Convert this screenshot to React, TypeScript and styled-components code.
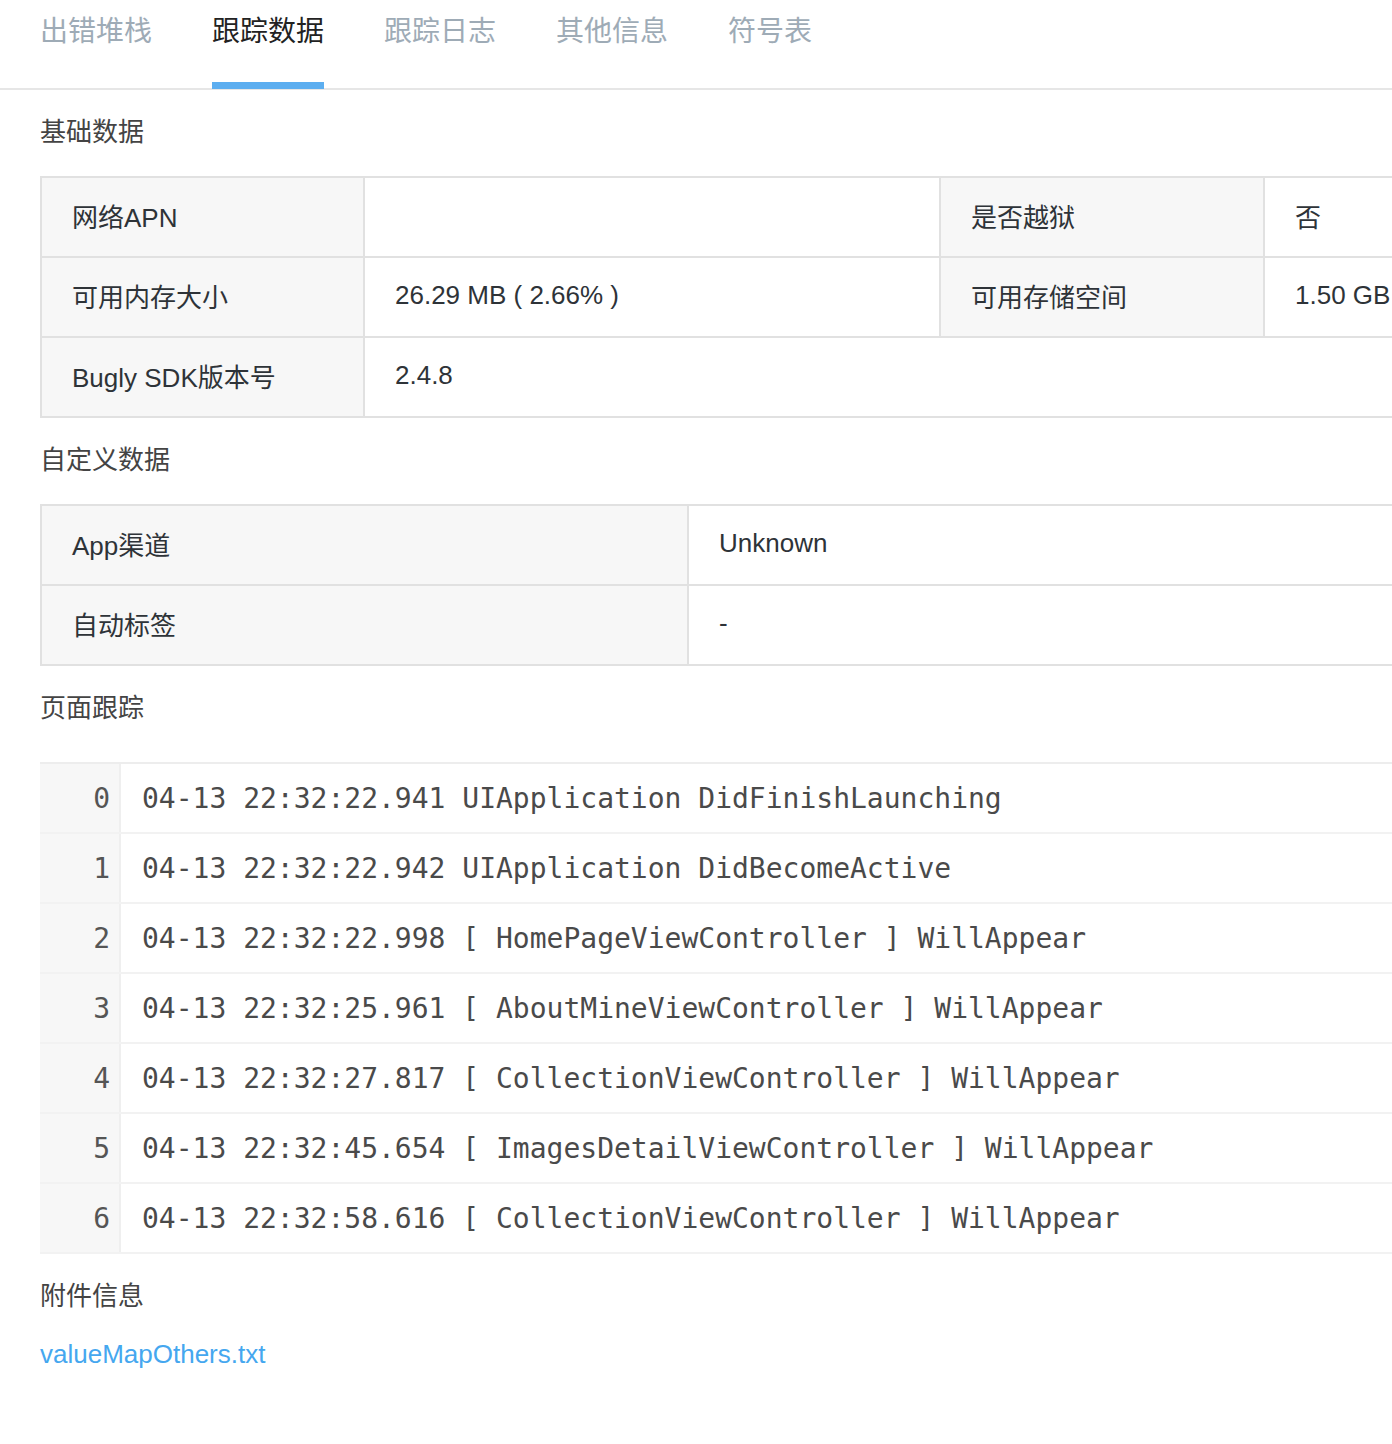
import React from "react";
import styled, { createGlobalStyle } from "styled-components";

const GlobalStyle = createGlobalStyle`
  html, body {
    margin: 0;
    padding: 0;
    background: #ffffff;
    overflow: hidden;
  }
  body {
    font-family: "Liberation Sans", "Noto Sans CJK SC", sans-serif;
  }
`;

const Page = styled.div`
  width: 1392px;
  min-height: 1444px;
  overflow: hidden;
  background: #fff;
`;

const TabBar = styled.div`
  display: flex;
  gap: 60px;
  padding-left: 40px;
  border-bottom: 2px solid #e6e6e6;
`;

const Tab = styled.div<{ $active?: boolean }>`
  height: 89px;
  padding-top: 9px;
  box-sizing: border-box;
  font-family: "Noto Sans CJK SC", sans-serif;
  font-size: 28px;
  line-height: 40px;
  color: ${(p) => (p.$active ? "#222" : "#9eabb6")};
  border-bottom: 7px solid ${(p) => (p.$active ? "#5caef0" : "transparent")};
  margin-bottom: -1px;
`;

const Content = styled.div`
  width: 1700px;
  padding-left: 40px;
`;

const SectionTitle = styled.div`
  padding: 24px 0 26px;
  font-size: 26px;
  line-height: 36px;
  color: #444;
`;

const Table = styled.div<{ $cols: string }>`
  display: grid;
  grid-template-columns: ${(p) => p.$cols};
  border-top: 2px solid #e1e1e1;
  border-left: 2px solid #e1e1e1;
  width: max-content;
`;

const Cell = styled.div<{ $label?: boolean; $span?: number }>`
  height: 80px;
  display: flex;
  align-items: center;
  padding: 0 0 4px 30px;
  box-sizing: border-box;
  font-size: 26px;
  color: #2e3338;
  background: ${(p) => (p.$label ? "#f7f7f7" : "#fff")};
  border-right: 2px solid #e1e1e1;
  border-bottom: 2px solid #e1e1e1;
  grid-column: ${(p) => (p.$span ? `span ${p.$span}` : "auto")};
  white-space: nowrap;
`;

const LogBox = styled.div`
  margin-top: 10px;
  border-top: 2px solid #ededed;
  width: 1600px;
`;

const LogRow = styled.div`
  display: flex;
  height: 70px;
  border-bottom: 2px solid #f2f2f2;
  box-sizing: border-box;
  font-family: "DejaVu Sans Mono", monospace;
  font-size: 28px;
  color: #4a4a4a;
`;

const Gutter = styled.div`
  width: 81px;
  flex: none;
  box-sizing: border-box;
  background: #f7f7f7;
  border-right: 2px solid #efefef;
  display: flex;
  align-items: center;
  justify-content: flex-end;
  padding-right: 9px;
  color: #555;
`;

const LogText = styled.div`
  display: flex;
  align-items: center;
  padding-left: 21px;
  white-space: pre;
`;

const Link = styled.a`
  display: block;
  font-size: 26px;
  line-height: 28px;
  color: #45a7ef;
  text-decoration: none;
`;

const tabs = ["出错堆栈", "跟踪数据", "跟踪日志", "其他信息", "符号表"];

const logs = [
  "04-13 22:32:22.941 UIApplication DidFinishLaunching",
  "04-13 22:32:22.942 UIApplication DidBecomeActive",
  "04-13 22:32:22.998 [ HomePageViewController ] WillAppear",
  "04-13 22:32:25.961 [ AboutMineViewController ] WillAppear",
  "04-13 22:32:27.817 [ CollectionViewController ] WillAppear",
  "04-13 22:32:45.654 [ ImagesDetailViewController ] WillAppear",
  "04-13 22:32:58.616 [ CollectionViewController ] WillAppear",
];

const App = () => {
  return (
    <Page>
      <GlobalStyle />
      <TabBar>
        {tabs.map((t) => (
          <Tab key={t} $active={t === "跟踪数据"}>
            {t}
          </Tab>
        ))}
      </TabBar>
      <Content>
        <SectionTitle>基础数据</SectionTitle>
        <Table $cols="323px 576px 324px 325px">
          <Cell $label>网络APN</Cell>
          <Cell></Cell>
          <Cell $label>是否越狱</Cell>
          <Cell>否</Cell>
          <Cell $label>可用内存大小</Cell>
          <Cell>26.29 MB ( 2.66% )</Cell>
          <Cell $label>可用存储空间</Cell>
          <Cell>1.50 GB</Cell>
          <Cell $label>Bugly SDK版本号</Cell>
          <Cell $span={3}>2.4.8</Cell>
        </Table>

        <SectionTitle>自定义数据</SectionTitle>
        <Table $cols="647px 900px">
          <Cell $label>App渠道</Cell>
          <Cell>Unknown</Cell>
          <Cell $label>自动标签</Cell>
          <Cell>-</Cell>
        </Table>

        <SectionTitle>页面跟踪</SectionTitle>
        <LogBox>
          {logs.map((line, i) => (
            <LogRow key={i}>
              <Gutter>{i}</Gutter>
              <LogText>{line}</LogText>
            </LogRow>
          ))}
        </LogBox>

        <SectionTitle>附件信息</SectionTitle>
        <Link href="#">valueMapOthers.txt</Link>
      </Content>
    </Page>
  );
};

export default App;
